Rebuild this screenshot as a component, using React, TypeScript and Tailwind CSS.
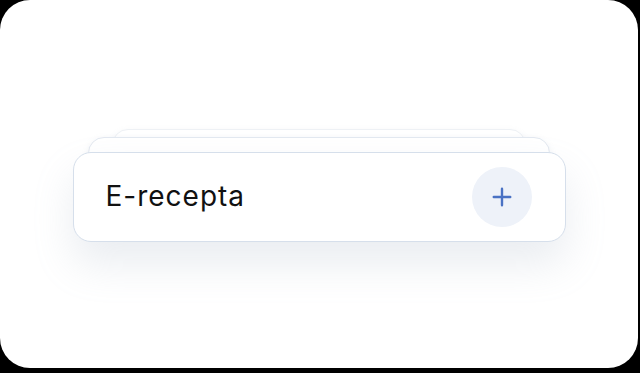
import React from 'react';

const PlusIcon = () => (
  <svg width="22" height="22" viewBox="0 0 24 24" fill="none" stroke="#4a72c4" strokeWidth="2.6" strokeLinecap="round">
    <path d="M12 3v18M3 12h18" />
  </svg>
);

const App = () => {
  return (
    <div className="w-[640px] h-[373px] bg-black">
      <div className="w-[638px] h-[368px] bg-white rounded-[30px] flex items-center justify-center">
        <div className="flex flex-col items-center pt-[2px]">
          <div className="w-[414px] h-[40px] rounded-[16px] bg-white border border-[#eef1f5] shadow-[0_2px_6px_rgba(148,163,184,0.12)] mb-[-32px]" />
          <div className="w-[462px] h-[40px] rounded-[16px] bg-white border border-[#e3e8f0] shadow-[0_2px_6px_rgba(148,163,184,0.15)] mb-[-25px]" />
          <div className="w-[493px] h-[90px] rounded-[18px] bg-white border border-[#d6dfeb] shadow-[0_22px_40px_rgba(148,163,184,0.2)] flex items-center justify-between pl-[32px] pr-[33px]">
            <span className="text-[28px] text-[#111111] tracking-[1px] font-['Inter',sans-serif] leading-none pb-[2px]">E-recepta</span>
            <div className="w-[60px] h-[60px] rounded-full bg-[#eef2f9] flex items-center justify-center">
              <PlusIcon />
            </div>
          </div>
        </div>
      </div>
    </div>
  );
};

export default App;
